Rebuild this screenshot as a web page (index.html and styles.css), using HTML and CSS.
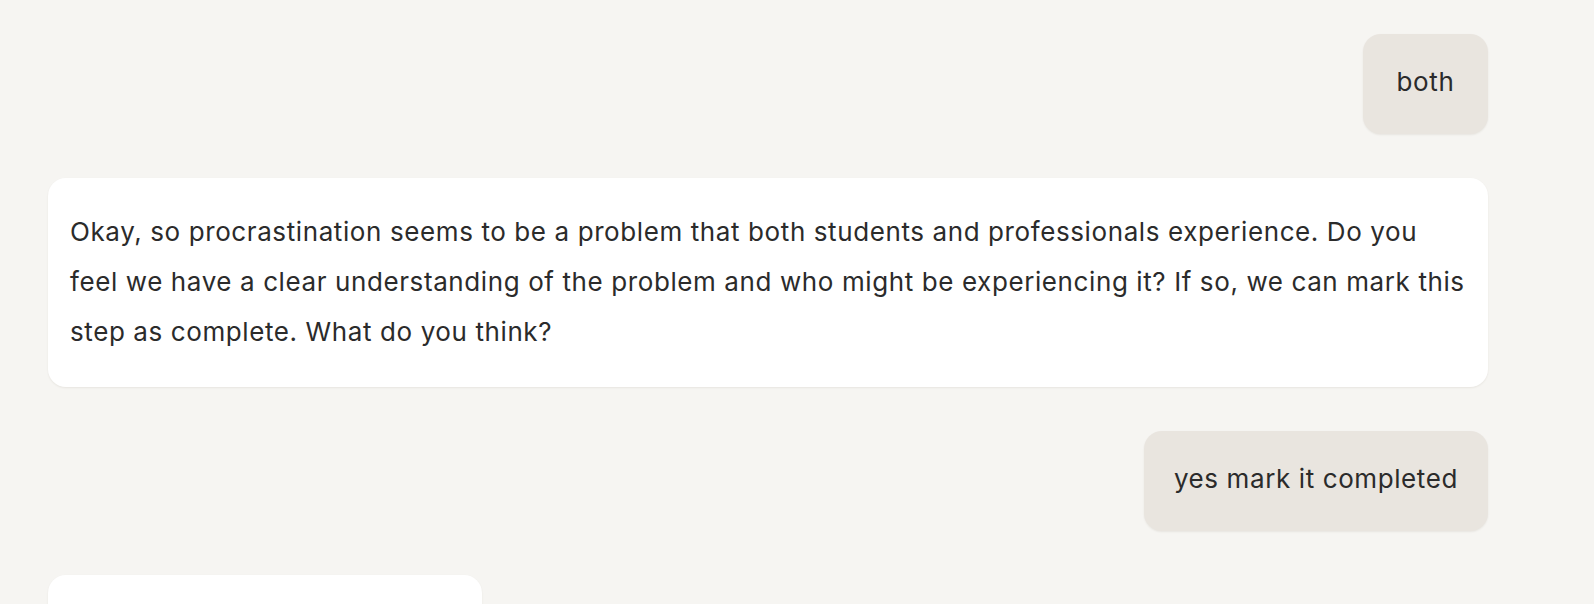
FILE: index.html
```html
<!DOCTYPE html>
<html lang="en">
<head>
<meta charset="utf-8">
<title>Chat</title>
<link rel="stylesheet" href="styles.css">
</head>
<body>
<main class="thread">
  <div class="msg msg-user"><div class="bubble bubble-user">both</div></div>
  <div class="msg msg-assistant"><div class="bubble bubble-assistant">Okay, so procrastination seems to be a problem that both students and professionals experience. Do you<br>feel we have a clear understanding of the problem and who might be experiencing it? If so, we can mark this<br>step as complete. What do you think?</div></div>
  <div class="msg msg-user"><div class="bubble bubble-user">yes mark it completed</div></div>
  <div class="msg msg-assistant"><div class="bubble bubble-assistant bubble-pending"></div></div>
</main>
</body>
</html>
```

FILE: styles.css
```css
html, body {
  margin: 0;
  padding: 0;
  background: #f6f5f2;
}
body {
  font-family: "Inter", "Open Sans", sans-serif;
  color: #2b2b2b;
  overflow: hidden;
  height: 604px;
}
.thread {
  display: flex;
  flex-direction: column;
  gap: 44px;
  padding: 34px 106px 0 48px;
}
.msg {
  display: flex;
}
.msg-user {
  justify-content: flex-end;
}
.msg-assistant {
  justify-content: flex-start;
}
.bubble {
  font-size: 26px;
  line-height: 50px;
  letter-spacing: 0.6px;
  border-radius: 18px;
  box-shadow: 0 1px 2px rgba(60, 50, 30, 0.08);
}
.bubble-user {
  box-sizing: border-box;
  min-width: 125px;
  background: #e9e5df;
  padding: 23px 30px 27px;
  text-align: center;
}
.bubble-assistant {
  background: #ffffff;
  padding: 29px 4px 30px 22px;
  flex: 1;
  white-space: nowrap;
}
.bubble-pending {
  flex: 0 0 434px;
  height: 120px;
  padding: 0;
}
```
